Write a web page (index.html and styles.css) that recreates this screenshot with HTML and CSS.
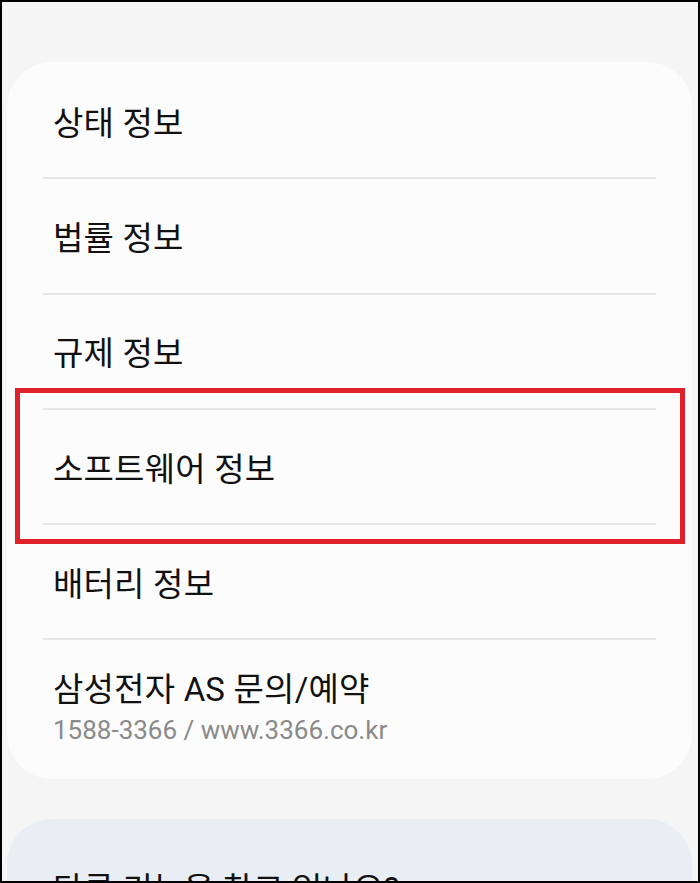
FILE: index.html
```html
<!DOCTYPE html>
<html lang="ko">
<head>
    <meta charset="UTF-8">
    <meta name="viewport" content="width=device-width, initial-scale=1.0">
    <title>휴대전화 정보</title>
    <link rel="stylesheet" href="styles.css">
</head>
<body>
    <div class="frame">
        <!-- 정보 목록 -->
        <div class="card">
            <ul class="info-list">
                <li class="info-item">상태 정보</li>
                <li class="info-item">법률 정보</li>
                <li class="info-item">규제 정보</li>
                <li class="info-item">소프트웨어 정보</li>
                <li class="info-item">배터리 정보</li>
                <li class="info-item info-item-last">
                    <div class="item-title">삼성전자 AS 문의/예약</div>
                    <div class="item-sub">1588-3366 / www.3366.co.kr</div>
                </li>
            </ul>
        </div>

        <!-- 다른 기능 -->
        <div class="more-card">
            <div class="more-title">다른 기능을 찾고 있나요?</div>
        </div>

        <!-- 강조 표시 -->
        <div class="highlight"></div>
    </div>
</body>
</html>
```

FILE: styles.css
```css
body {
    margin: 0;
    font-family: Roboto, "Noto Sans CJK KR", sans-serif;
    background-color: #000;
}

.frame {
    position: relative;
    width: 700px;
    height: 883px;
    box-sizing: border-box;
    border: 2px solid #000;
    background-color: #f5f5f5;
    overflow: hidden;
}

.card {
    margin: 60px 6px 0 5px;
    padding: 2px 36px 0;
    background-color: #fcfcfc;
    border-radius: 45px;
}

.info-list {
    list-style: none;
    margin: 0;
    padding: 0;
}

.info-item {
    display: flex;
    align-items: center;
    height: 113.3px;
    padding-left: 10px;
    border-bottom: 2px solid #e6e6e6;
    font-size: 33px;
    letter-spacing: 0.2px;
    color: #111;
}

.info-item-last {
    display: block;
    height: auto;
    padding-top: 30px;
    padding-bottom: 32px;
    border-bottom: none;
}

.item-title {
    line-height: 40px;
}

.item-sub {
    margin-top: 3px;
    font-size: 26px;
    line-height: 34px;
    letter-spacing: 0;
    color: #8a8a8a;
}

.more-card {
    margin: 40px 6px 0 5px;
    height: 120px;
    padding: 44px 0 0 46px;
    background-color: #e8eef4;
    border-radius: 45px;
}

.more-title {
    font-size: 33px;
    letter-spacing: 0.2px;
    color: #111;
}

.highlight {
    position: absolute;
    left: 13px;
    top: 386px;
    width: 670px;
    height: 156px;
    box-sizing: border-box;
    border: 5px solid #e0212b;
}
```
